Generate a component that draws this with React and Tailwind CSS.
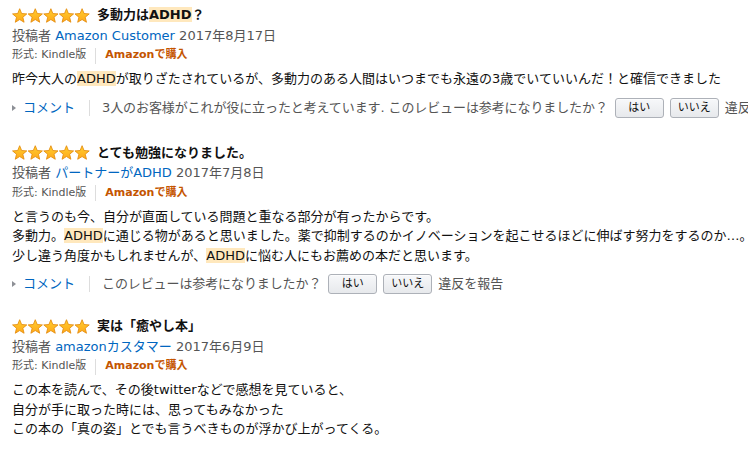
import React from 'react';

const reviews = [
  {
    title: ['多動力は', { hl: 'ADHD' }, '？'],
    author: 'Amazon Customer',
    date: '2017年8月17日',
    body: [
      ['昨今大人の', { hl: 'ADHD' }, 'が取りざたされているが、多動力のある人間はいつまでも永遠の3歳でいていいんだ！と確信できました'],
    ],
    helpful: '3人のお客様がこれが役に立ったと考えています. このレビューは参考になりましたか？',
    gap: 'mb-[25px]',
  },
  {
    title: ['とても勉強になりました。'],
    author: 'パートナーがADHD',
    date: '2017年7月8日',
    body: [
      ['と言うのも今、自分が直面している問題と重なる部分が有ったからです。'],
      ['多動力。', { hl: 'ADHD' }, 'に通じる物があると思いました。薬で抑制するのかイノベーションを起こせるほどに伸ばす努力をするのか…。'],
      ['少し違う角度かもしれませんが、', { hl: 'ADHD' }, 'に悩む人にもお薦めの本だと思います。'],
    ],
    helpful: 'このレビューは参考になりましたか？',
    gap: 'mb-[22px]',
  },
  {
    title: ['実は「癒やし本」'],
    author: 'amazonカスタマー',
    date: '2017年6月9日',
    body: [
      ['この本を読んで、その後twitterなどで感想を見ていると、'],
      ['自分が手に取った時には、思ってもみなかった'],
      ['この本の「真の姿」とでも言うべきものが浮かび上がってくる。'],
    ],
    helpful: null,
    gap: '',
  },
];

function Parts({ parts }) {
  return parts.map((p, i) =>
    typeof p === 'string' ? (
      <span key={i}>{p}</span>
    ) : (
      <span key={i} className="bg-[#ffe8bd]">{p.hl}</span>
    )
  );
}

function Stars() {
  const pts = '7,0.4 8.88,5.01 13.85,5.38 10.04,8.59 11.23,13.42 7,10.8 2.77,13.42 3.96,8.59 0.15,5.38 5.12,5.01';
  return (
    <svg width="80" height="15" viewBox="0 0 80 15" className="shrink-0">
      <defs>
        <linearGradient id="starg" x1="0" y1="0" x2="0" y2="1">
          <stop offset="0" stopColor="#ffce2e" />
          <stop offset="1" stopColor="#ffa81a" />
        </linearGradient>
      </defs>
      {[0, 1, 2, 3, 4].map((i) => (
        <polygon
          key={i}
          points={pts}
          transform={`translate(${0.4 + i * 15.6},0.3) scale(1.04)`}
          fill="url(#starg)"
          stroke="#e38a0a"
          strokeWidth="0.8"
          strokeLinejoin="round"
        />
      ))}
    </svg>
  );
}

function VoteButton({ children }) {
  return (
    <button className="h-[20px] w-[49px] rounded-[3px] border border-[#adb1b8] bg-gradient-to-b from-[#f7f8fa] to-[#e7e9ec] text-[11px] leading-[18px] text-[#111] shadow-[inset_0_1px_0_rgba(255,255,255,0.6)]">
      {children}
    </button>
  );
}

function Review({ r }) {
  return (
    <div className={r.gap}>
      <div className="flex h-[20px] items-center">
        <Stars />
        <span className="ml-[5px] text-[13px] font-bold text-[#111]">
          <Parts parts={r.title} />
        </span>
      </div>
      <div className="flex h-[21px] items-center text-[13px] text-[#555]">
        <span>投稿者&nbsp;</span>
        <span className="text-[#0066c0]">{r.author}</span>
        <span>&nbsp;{r.date}</span>
      </div>
      <div className="flex h-[19px] items-center">
        <span className="text-[11px] text-[#555]">形式: Kindle版</span>
        <span className="mx-[9px] h-[16px] border-l border-[#ddd]"></span>
        <span className="text-[11px] font-bold text-[#c45500]">Amazonで購入</span>
      </div>
      <div className="mt-[4px] whitespace-nowrap text-[13px] leading-[19.5px] text-[#111]">
        {r.body.map((line, i) => (
          <div key={i}>
            <Parts parts={line} />
          </div>
        ))}
      </div>
      {r.helpful && (
        <div className="mt-[9px] flex h-[20px] items-center whitespace-nowrap text-[13px]">
          <span className="h-0 w-0 border-y-[3.5px] border-l-[4px] border-y-transparent border-l-[#8d9096]"></span>
          <span className="ml-[7px] text-[#0066c0]">コメント</span>
          <span className="ml-[14px] mr-[12px] h-[16px] border-l border-[#ddd]"></span>
          <span className="tracking-[-0.1px] text-[#555]">{r.helpful}</span>
          <div className="ml-[7px] flex gap-[6px]">
            <VoteButton>はい</VoteButton>
            <VoteButton>いいえ</VoteButton>
          </div>
          <span className="ml-[6px] text-[#555]">違反を報告</span>
        </div>
      )}
    </div>
  );
}

export default function App() {
  return (
    <div className="h-[454px] w-[748px] overflow-hidden bg-white pl-[12px] pt-[5px] font-['DejaVu_Sans','Noto_Sans_CJK_JP',sans-serif]">
      {reviews.map((r, i) => (
        <Review key={i} r={r} />
      ))}
    </div>
  );
}
